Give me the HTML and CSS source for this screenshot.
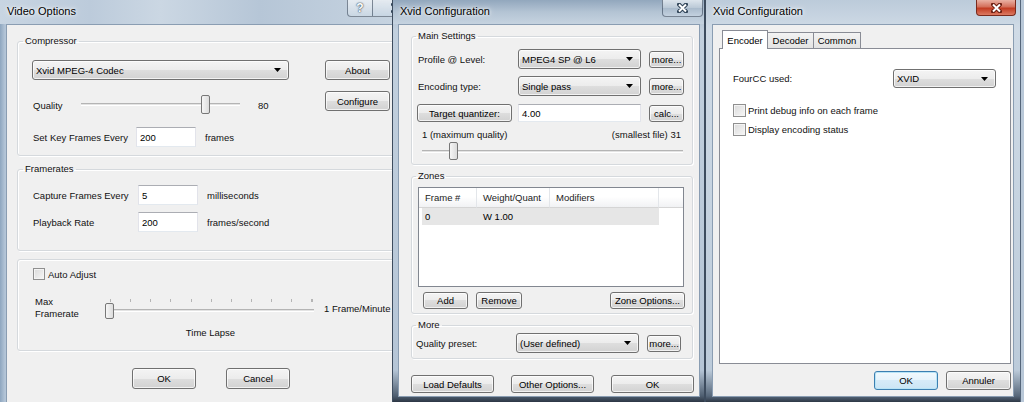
FILE: index.html
```html
<!DOCTYPE html>
<html lang="en">
<head>
    <meta charset="UTF-8">
    <title>Video Options / Xvid Configuration</title>
    <link rel="stylesheet" href="styles.css">
</head>
<body>
<div class="desk">

    <!-- Video Options -->
    <div class="win w1">
        <div class="titlebar">
            <span class="caption">Video Options</span>
            <div class="capbtns">
                <span class="cb help">?</span>
                <span class="cb close">
                    <svg width="11" height="10" viewBox="0 0 11 10"><path d="M2 1.5l7 7M9 1.5l-7 7" stroke="#2f4357" stroke-width="4" stroke-linecap="round"/><path d="M2 1.5l7 7M9 1.5l-7 7" stroke="#fff" stroke-width="2"/></svg>
                </span>
            </div>
        </div>
        <div class="client">
            <fieldset class="grp g-comp">
                <legend>Compressor</legend>
                <div class="grp-body comp-cols">
                    <div class="comp-left">
                        <div class="combo c-codec"><span>Xvid MPEG-4 Codec</span><svg class="dd" width="7" height="4" viewBox="0 0 7 4"><path d="M0 0h7L3.5 4z"/></svg></div>
                        <div class="row r-quality">
                            <span class="lbl l-quality">Quality</span>
                            <div class="slider s-quality">
                                <div class="track"></div>
                                <div class="thumb" style="left:120px"></div>
                            </div>
                            <span class="val">80</span>
                        </div>
                        <div class="row r-kf">
                            <span class="lbl l-kf">Set Key Frames Every</span>
                            <div class="edit e-w1">200</div>
                            <span class="unit">frames</span>
                        </div>
                    </div>
                    <div class="comp-right">
                        <button class="btn b-side">About</button>
                        <button class="btn b-side b-conf">Configure</button>
                    </div>
                </div>
            </fieldset>

            <fieldset class="grp g-rates">
                <legend>Framerates</legend>
                <div class="grp-body">
                    <div class="row r-rate">
                        <span class="lbl l-rate">Capture Frames Every</span>
                        <div class="edit e-w1">5</div>
                        <span class="unit">milliseconds</span>
                    </div>
                    <div class="row r-rate r-play">
                        <span class="lbl l-rate">Playback Rate</span>
                        <div class="edit e-w1">200</div>
                        <span class="unit">frames/second</span>
                    </div>
                </div>
            </fieldset>

            <fieldset class="grp g-auto">
                <div class="grp-body">
                    <div class="row r-check">
                        <span class="check"></span>
                        <span>Auto Adjust</span>
                    </div>
                    <div class="row r-max">
                        <span class="lbl l-max">Max<br>Framerate</span>
                        <div class="slider s-max">
                            <div class="ticks"></div>
                            <div class="track"></div>
                            <div class="thumb" style="left:-2px"></div>
                        </div>
                        <span class="unit u-max">1 Frame/Minute</span>
                    </div>
                    <div class="lapse">Time Lapse</div>
                </div>
            </fieldset>

            <div class="row r-dlg1">
                <button class="btn b-dlg1">OK</button>
                <button class="btn b-dlg1 b-cancel">Cancel</button>
            </div>
        </div>
    </div>

    <!-- Xvid Configuration (main) -->
    <div class="win w2">
        <div class="titlebar">
            <span class="caption">Xvid Configuration</span>
            <div class="capbtns">
                <span class="cb close">
                    <svg width="11" height="10" viewBox="0 0 11 10"><path d="M2 1.5l7 7M9 1.5l-7 7" stroke="#2f4357" stroke-width="4" stroke-linecap="round"/><path d="M2 1.5l7 7M9 1.5l-7 7" stroke="#fff" stroke-width="2"/></svg>
                </span>
            </div>
        </div>
        <div class="client">
            <fieldset class="grp x-grp g-main">
                <legend>Main Settings</legend>
                <div class="grp-body b-main">
                    <div class="row x-row">
                        <span class="lbl x-lbl">Profile @ Level:</span>
                        <div class="combo x-combo"><span>MPEG4 SP @ L6</span><svg class="dd" width="7" height="4" viewBox="0 0 7 4"><path d="M0 0h7L3.5 4z"/></svg></div>
                        <button class="btn b-more">more...</button>
                    </div>
                    <div class="row x-row x-gap">
                        <span class="lbl x-lbl">Encoding type:</span>
                        <div class="combo x-combo"><span>Single pass</span><svg class="dd" width="7" height="4" viewBox="0 0 7 4"><path d="M0 0h7L3.5 4z"/></svg></div>
                        <button class="btn b-more">more...</button>
                    </div>
                    <div class="row x-row r-target">
                        <button class="btn b-target">Target quantizer:</button>
                        <div class="edit e-quant">4.00</div>
                        <button class="btn b-more">calc...</button>
                    </div>
                    <div class="row r-range">
                        <span>1 (maximum quality)</span>
                        <span>(smallest file) 31</span>
                    </div>
                    <div class="slider s-quant">
                        <div class="track"></div>
                        <div class="thumb" style="left:27px"></div>
                    </div>
                </div>
            </fieldset>

            <fieldset class="grp x-grp g-zones">
                <legend>Zones</legend>
                <div class="grp-body b-zones">
                    <div class="listview">
                        <div class="lv-head">
                            <span class="lv-h h1">Frame #</span>
                            <span class="lv-h h2">Weight/Quant</span>
                            <span class="lv-h h3">Modifiers</span>
                            <span class="lv-h h4"></span>
                        </div>
                        <div class="lv-row">
                            <span class="lv-c c1">0</span>
                            <span class="lv-c c2">W 1.00</span>
                        </div>
                    </div>
                    <div class="row r-zbtns">
                        <button class="btn b-add">Add</button>
                        <button class="btn b-remove">Remove</button>
                        <button class="btn b-zopt">Zone Options...</button>
                    </div>
                </div>
            </fieldset>

            <fieldset class="grp x-grp g-more">
                <legend>More</legend>
                <div class="grp-body b-more-grp">
                    <div class="row x-row">
                        <span class="lbl x-lbl l-preset">Quality preset:</span>
                        <div class="combo x-combo"><span>(User defined)</span><svg class="dd" width="7" height="4" viewBox="0 0 7 4"><path d="M0 0h7L3.5 4z"/></svg></div>
                        <button class="btn b-more b-more2">more...</button>
                    </div>
                </div>
            </fieldset>

            <div class="row r-dlg2">
                <button class="btn b-dlg2">Load Defaults</button>
                <button class="btn b-dlg2">Other Options...</button>
                <button class="btn b-dlg2">OK</button>
            </div>
        </div>
    </div>

    <!-- Xvid Configuration (tabs) -->
    <div class="win w3">
        <div class="titlebar">
            <span class="caption">Xvid Configuration</span>
            <div class="capbtns">
                <span class="cb close">
                    <svg width="11" height="10" viewBox="0 0 11 10"><path d="M2 1.5l7 7M9 1.5l-7 7" stroke="#6b1d10" stroke-width="4" stroke-linecap="round"/><path d="M2 1.5l7 7M9 1.5l-7 7" stroke="#fff" stroke-width="2"/></svg>
                </span>
            </div>
        </div>
        <div class="client">
            <div class="tabs">
                <span class="tab sel">Encoder</span>
                <span class="tab">Decoder</span>
                <span class="tab t-common">Common</span>
            </div>
            <div class="page">
                <div class="row r-fourcc">
                    <span class="lbl l-fourcc">FourCC used:</span>
                    <div class="combo c-fourcc"><span>XVID</span><svg class="dd" width="7" height="4" viewBox="0 0 7 4"><path d="M0 0h7L3.5 4z"/></svg></div>
                </div>
                <div class="row r-opt">
                    <span class="check"></span>
                    <span>Print debug info on each frame</span>
                </div>
                <div class="row r-opt r-opt2">
                    <span class="check"></span>
                    <span>Display encoding status</span>
                </div>
            </div>
            <div class="row r-dlg3">
                <button class="btn b-dlg3 b-default">OK</button>
                <button class="btn b-dlg3 b-annuler">Annuler</button>
            </div>
        </div>
    </div>

</div>
</body>
</html>
```

FILE: styles.css
```css
* { box-sizing: border-box; }
body {
    margin: 0;
    width: 1024px;
    height: 402px;
    overflow: hidden;
    background: #b9c8d8;
    font-family: "Liberation Sans", Arial, sans-serif;
    font-size: 9.5px;
    color: #111;
}
.desk { display: flex; height: 402px; }

/* windows */
.win { display: flex; flex-direction: column; height: 402px; overflow: hidden; flex: none; }
.w1 { width: 392px; background: linear-gradient(90deg, #8ea6bf 0, #b4c5d7 5px); }
.w2 { width: 313px; border-left: 1px solid #3d4c5e; border-right: 1px solid #3d4c5e; background: linear-gradient(180deg, #9fb2c6 0, #c2d0de 30px, #b5c5d6 370px, #4e5e70 396px, #2c3644 402px); }
.w3 { width: 316px; border-left: 1px solid #3d4c5e; border-right: 1px solid #55667a; background: linear-gradient(180deg, #c3d1df 0, #d0dbe6 30px, #bccbda 370px, #56677a 396px, #2e3846 402px); }

.titlebar { height: 24px; display: flex; flex: none; }
.w1 .titlebar { background: linear-gradient(90deg, #c8d5e2 0, #bccbdb 90px, #cbd7e3 160px, #b6c6d7 260px, #c6d3e0 392px); }
.w2 .titlebar { background: linear-gradient(180deg, #92a7bd 0, #b4c4d4 12px, #c6d3e0 24px); }
.w3 .titlebar { background: linear-gradient(180deg, #bccbda 0, #ccd8e4 24px); }
.caption {
    font-size: 11px;
    line-height: 23px;
    color: #000;
    padding-left: 7px;
    text-shadow: 0 0 6px #fff, 0 0 3px #fff;
}
.w2 .caption, .w3 .caption { padding-left: 7px; }

.capbtns { margin-left: auto; display: flex; align-self: flex-start; }
.cb {
    height: 17px;
    display: flex;
    align-items: center;
    justify-content: center;
    border: 1px solid rgba(40, 55, 75, .55);
    border-top: none;
}
.help {
    width: 26px;
    border-radius: 0 0 0 4px;
    background: linear-gradient(rgba(255, 255, 255, .6), rgba(205, 218, 230, .7));
    font-weight: bold;
    font-size: 12px;
    color: #fff;
    text-shadow: 0 0 2px #2f4357, 0 0 1px #2f4357;
}
.w1 .close { width: 30px; border-left: none; background: linear-gradient(rgba(255, 255, 255, .55), rgba(200, 214, 228, .7)); justify-content: flex-end; padding-right: 0; }
.w1 .capbtns { margin-right: -11px; }
.w2 .close { width: 41px; margin-right: 1px; border-radius: 0 0 4px 4px; background: linear-gradient(#dce4ec, #bac8d6 50%, #a9bacb 50%, #c3d1df); }
.w3 .close { width: 40px; height: 16px; margin-right: 4px; border-radius: 0 0 4px 4px; border-color: #7a2a1c; background: linear-gradient(#eab1a3, #d4705b 45%, #c23c22 55%, #dc7a62); }

.client { flex: 1; background: #f0f0f0; border: 1px solid #8a9db2; display: flex; flex-direction: column; min-height: 0; }
.w1 .client { margin-left: 6px; border-right: none; border-bottom: none; overflow: hidden; }
.w2 .client { margin: 0 4px 5px 5px; }
.w3 .client { margin: 0 6px 5px 6px; }

/* group boxes */
.grp {
    margin: 0;
    padding: 0;
    border: 1px solid #d5d9dd;
    border-radius: 3px;
    box-shadow: inset 1px 1px 0 #fff, 1px 1px 0 #fff;
    min-width: 0;
}
.grp legend { padding: 0 2px; line-height: 12px; }
.grp-body { display: flex; flex-direction: column; }

.row { display: flex; align-items: center; flex: none; }
.lbl { flex: none; }

/* controls */
.btn {
    font: inherit;
    color: #000;
    padding: 0;
    flex: none;
    border: 1px solid #707070;
    border-radius: 3px;
    background: linear-gradient(#f4f4f4 0, #ececec 50%, #dedede 50%, #d2d2d2 100%);
    box-shadow: inset 0 0 0 1px rgba(255, 255, 255, .7);
    text-align: center;
}
.combo {
    flex: none;
    display: flex;
    align-items: center;
    justify-content: space-between;
    padding: 0 7px 0 3px;
    border: 1px solid #707070;
    border-radius: 3px;
    background: linear-gradient(#f4f4f4 0, #ececec 50%, #dedede 50%, #d2d2d2 100%);
    box-shadow: inset 0 0 0 1px rgba(255, 255, 255, .7);
    color: #000;
}
.dd { fill: #000; flex: none; }
.edit {
    flex: none;
    display: flex;
    align-items: center;
    padding-left: 3px;
    background: #fff;
    border: 1px solid #e2e3ea;
    border-top-color: #abadb3;
    border-bottom-color: #e3e9ef;
    color: #000;
}
.check {
    flex: none;
    width: 13px;
    height: 13px;
    border: 1px solid #8f8f8f;
    background: linear-gradient(135deg, #dadada, #f7f7f7);
    box-shadow: inset 0 0 0 1px #f4f4f4;
}
.slider { position: relative; display: flex; flex-direction: column; flex: none; }
.track {
    height: 3px;
    border-top: 1px solid #b4b4b4;
    border-bottom: 1px solid #fff;
    background: #e3e3e3;
}
.thumb {
    position: absolute;
    top: 0;
    width: 9px;
    height: 19px;
    border: 1px solid #777;
    border-radius: 2px;
    background: linear-gradient(90deg, #f6f6f6, #dcdcdc);
}
.ticks {
    height: 3px;
    margin: 3px 0 0 3px;
    background: repeating-linear-gradient(90deg, #b5b5b5 0 1px, transparent 1px 20.15px);
}

/* Video Options */
.w1 .grp { margin-left: 10px; margin-right: -20px; }
.g-comp { margin-top: 10px; }
.g-comp legend { margin-left: 5px; }
.comp-cols { flex-direction: row; padding: 13px 0 8px 14px; }
.comp-left { width: 257px; display: flex; flex-direction: column; }
.comp-right { margin-left: 36px; display: flex; flex-direction: column; }
.c-codec { height: 20px; }
.b-side { width: 65px; height: 20px; }
.b-conf { margin-top: 11px; }
.r-quality { height: 20px; margin-top: 15px; }
.l-quality { width: 49px; padding-left: 1px; }
.s-quality { width: 159px; height: 20px; }
.s-quality .track { margin-top: 8px; }
.val { margin-left: 18px; }
.r-kf { height: 20px; margin-top: 12px; }
.l-kf { width: 104px; padding-left: 1px; }
.e-w1 { width: 60px; height: 20px; }
.unit { margin-left: 9px; }

.g-rates { margin-top: 7px; }
.g-rates legend { margin-left: 5px; }
.g-rates .grp-body { padding: 10px 0 18px 14px; }
.r-rate { height: 20px; }
.r-play { margin-top: 7px; }
.l-rate { width: 106px; padding-left: 1px; }

.g-auto { margin-top: 8px; }
.g-auto .grp-body { padding: 6px 0 11px 14px; }
.r-check { height: 16px; padding-left: 1px; }
.r-check .check { width: 12px; height: 12px; margin-right: 3px; }
.r-max { height: 24px; margin-top: 14px; }
.l-max { width: 75px; padding-left: 3px; line-height: 12px; }
.s-max { width: 207px; height: 24px; }
.s-max .track { margin-top: 7px; }
.s-max .thumb { top: 7px; height: 16px; }
.u-max { margin-left: 10px; white-space: nowrap; }
.lapse { margin: 7px 0 0 75px; width: 207px; text-align: center; line-height: 12px; }

.r-dlg1 { margin-top: 17px; padding-left: 125px; }
.b-dlg1 { width: 64px; height: 21px; }
.b-cancel { margin-left: 30px; }

/* Xvid Configuration */
.x-grp { margin: 0 6px 0 12px; }
.x-grp legend { margin-left: 4px; }
.g-main { margin-top: 5px; }
.b-main { padding: 7px 0 4px 0; }
.x-row { height: 20px; }
.x-gap { margin-top: 7px; }
.x-lbl { width: 106px; padding-left: 6px; }
.x-combo { width: 123px; height: 20px; }
.b-more { width: 35px; height: 17px; margin-left: 8px; }
.r-target { height: 18px; margin-top: 8px; }
.b-target { width: 95px; height: 18px; margin-left: 5px; }
.e-quant { width: 123px; height: 18px; margin-left: 6px; }
.r-range { height: 12px; margin: 6px 11px 0 10px; justify-content: space-between; }
.s-quant { width: 261px; height: 18px; margin: 2px 0 0 10px; }
.s-quant .track { margin-top: 8px; }
.s-quant .thumb { height: 18px; }

.g-zones { margin-top: 5px; }
.b-zones { padding: 5px 0 4px 0; }
.listview { width: 266px; height: 100px; margin-left: 6px; border: 1px solid #828790; background: #fff; }
.lv-head { display: flex; height: 20px; }
.lv-h {
    display: flex;
    align-items: center;
    padding-left: 6px;
    background: linear-gradient(#fff 0, #fff 45%, #f1f2f4 100%);
    border-right: 1px solid #e3e6ea;
    border-bottom: 1px solid #d5d5d5;
    color: #222;
}
.h1 { width: 58px; }
.h2 { width: 73px; }
.h3 { width: 109px; }
.h4 { flex: 1; border-right: none; }
.lv-row { display: flex; align-items: center; width: 237px; height: 17px; margin-left: 3px; background: #e6e6e6; color: #000; }
.c1 { width: 55px; padding-left: 3px; }
.c2 { padding-left: 6px; }
.r-zbtns { height: 17px; margin-top: 5px; }
.b-add { width: 45px; height: 17px; margin-left: 11px; }
.b-remove { width: 46px; height: 17px; margin-left: 8px; }
.b-zopt { width: 75px; height: 17px; margin-left: auto; margin-right: 7px; }

.g-more { margin-top: 5px; }
.b-more-grp { padding: 2px 0 5px 0; }
.l-preset { width: 104px; padding-left: 4px; }
.b-more2 { width: 34px; }

.r-dlg2 { margin-top: 16px; padding-left: 12px; }
.b-dlg2 { width: 83px; height: 18px; margin-right: 17px; }

/* tabs window */
.tabs { display: flex; align-items: flex-end; height: 18px; margin: 5px 0 0 9px; }
.tab {
    width: 46px;
    height: 16px;
    display: flex;
    align-items: center;
    justify-content: center;
    border: 1px solid #898c95;
    border-bottom: none;
    border-left: none;
    background: linear-gradient(#f3f3f3, #e3e3e3);
    color: #000;
}
.tab.sel { height: 19px; margin-bottom: -1px; border-left: 1px solid #898c95; background: #fff; position: relative; z-index: 1; }
.t-common { width: 47px; }
.page {
    height: 316px;
    margin: 0 2px 0 6px;
    border: 1px solid #898c95;
    background: #fff;
    padding: 20px 0 0 13px;
}
.r-fourcc { height: 19px; }
.l-fourcc { width: 160px; }
.c-fourcc { width: 103px; height: 19px; }
.r-opt { height: 13px; margin-top: 16px; }
.r-opt .check { margin-right: 2px; }
.r-opt2 { margin-top: 6px; }
.r-dlg3 { margin: 7px 2px 0 0; justify-content: flex-end; }
.b-dlg3 { width: 64px; height: 19px; }
.b-default {
    margin-right: 8px;
    border-color: #3c7fb1;
    background: linear-gradient(#f2f9fd 0, #e6f3fb 50%, #d6ebf8 50%, #cbe5f5 100%);
    box-shadow: inset 0 0 0 1px #b9e4f6;
}
.b-annuler { width: 65px; }
```
